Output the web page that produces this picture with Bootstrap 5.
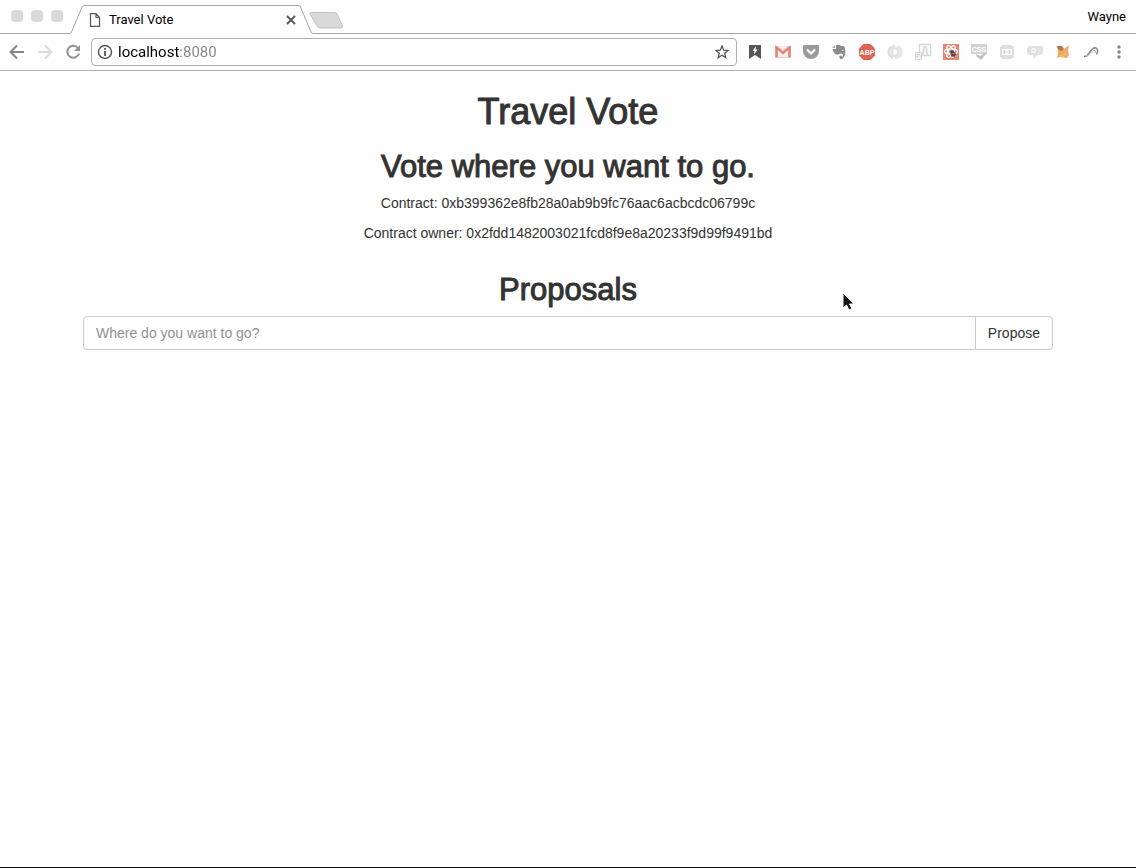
<!DOCTYPE html>
<html lang="en">
<head>
<meta charset="utf-8">
<meta name="viewport" content="width=device-width, initial-scale=1">
<title>Travel Vote</title>
<link rel="stylesheet" href="https://cdn.jsdelivr.net/npm/bootstrap@5.3.0/dist/css/bootstrap.min.css">
<style>
  body { background: #fefefe; color: #333; font-family: "Liberation Sans", Arial, sans-serif; font-size: 14px; line-height: 20px; }
  .window { border-bottom: 1px solid #111; }
  .tabstrip { height: 34px; font-size: 12px; color: #000; }
  .strip-fill { border-bottom: 1px solid #a8a8a8; }
  .lights { width: 70px; padding: 10px 0 0 11px; gap: 8px; }
  .light { width: 12px; height: 12px; border-radius: 4px; background: #d9d9d9; }
  .slant { width: 14px; height: 34px; fill: none; stroke: #a8a8a8; }
  .tab { width: 215px; margin-top: 5px; border-top: 1px solid #a8a8a8; padding: 0 0 0 5px; }
  .tab-name, .profile { font-family: Roboto, "Liberation Sans", sans-serif; font-size: 13px; }
  .profile { padding-right: 10px; }
  .tool { display: flex; align-items: center; justify-content: center; width: 28px; height: 28px; flex: none; padding: 0; border: 0; background: none; }
  .tool-sm { width: 16px; height: 16px; }
  .toolbar { height: 37px; border-bottom: 1px solid #b0b0b0; padding: 4px 3px 4px 3px; }
  .address { height: 28px; border: 1px solid #b0b0b0; border-radius: 4px; margin-right: 4px; }
  /* the host name is black, the port after it grey */
  .url { border: 0; outline: 0; padding: 0; min-width: 0; font-family: Roboto, "Liberation Sans", sans-serif; font-size: 15px; color: transparent; background: linear-gradient(90deg, #000 61px, #858585 61px); -webkit-background-clip: text; background-clip: text; }
  .vote { max-width: 970px; padding: 20px 0 0; }
  h1, h2 { color: #333; font-weight: 400; -webkit-text-stroke: 1px #333; }
  h1 { font-size: 36px; line-height: 41px; margin: 0 0 18px; }
  h2 { font-size: 31px; line-height: 33px; margin: 0 0 10px; }
  .proposals { margin-top: 30px; }
  .vote p { margin: 0 0 10px; }
  .vote .form-control, .vote .btn { height: 34px; font-size: 14px; line-height: 20px; border: 1px solid #ccc; padding: 6px 12px; border-radius: 4px; background: #fff; color: #333; }
  .vote .form-control::placeholder { color: #919191; }
  .pointer { top: 221px; left: calc(50% + 274px); }
</style>
</head>
<body>
<div class="window d-flex flex-column min-vh-100">
  <header>
    <div class="tabstrip d-flex">
      <div class="strip-fill lights d-flex"><span class="light"></span><span class="light"></span><span class="light"></span></div>
      <svg class="slant" viewBox="0 0 14 34"><path d="M0 33.5 Q1 33.5 1.500 32 L12 7 Q13 5.500 14 5.500"/></svg>
      <div class="tab d-flex align-items-center">
        <svg width="12" height="14" viewBox="0 0 12 14" fill="#fff" stroke="#555" stroke-width="1.200"><path d="M1.500 .7H7L10.500 4.500V13.300H1.500ZM7 .7V4.500H10.500"/></svg>
        <span class="tab-name ms-2 flex-grow-1">Travel Vote</span>
        <button class="tool tool-sm" aria-label="Close tab"><svg width="10" height="10" viewBox="0 0 10 10" stroke="#555" stroke-width="1.800"><path d="M1 1L9 9M9 1L1 9"/></svg></button>
      </div>
      <svg class="slant" viewBox="0 0 14 34"><path d="M0 5.500 Q1 5.500 1.500 7L12 32Q13 33.500 14 33.500"/></svg>
      <div class="strip-fill flex-grow-1 d-flex align-items-center justify-content-between">
        <button class="tool" aria-label="New tab"><svg width="36" height="20" viewBox="0 0 36 20" class="flex-shrink-0 mt-2"><path d="M3 1.500H25Q27 1.500 28 3L33.500 15Q34 17 32 17H11Q9 17 8 15L1 3Q.5 1.500 3 1.500Z" fill="#d9d9d9" stroke="#c2c2c2"/></svg></button>
        <span class="profile">Wayne</span>
      </div>
    </div>
    <nav class="toolbar d-flex align-items-center" aria-label="Browser toolbar">
      <button class="tool" aria-label="Back"><svg width="16" height="16" viewBox="0 0 16 16" fill="none" stroke="#858585" stroke-width="2"><path d="M15 8H2M8 1.500L1.500 8L8 14.500"/></svg></button>
      <button class="tool" aria-label="Forward"><svg width="16" height="16" viewBox="0 0 16 16" fill="none" stroke="#dcdcdc" stroke-width="2"><path d="M1 8H14M8 1.500L14.500 8L8 14.500"/></svg></button>
      <button class="tool" aria-label="Reload"><svg width="16" height="16" viewBox="0 0 16 16" fill="none" stroke="#929292" stroke-width="2"><path d="M13 4A6 6 0 1 0 14 9.500"/><path d="M15 1V7H9Z" fill="#929292" stroke="none"/></svg></button>
      <div class="address d-flex align-items-center flex-grow-1 ms-1">
        <svg class="ms-1 me-1 flex-shrink-0" width="18" height="16" viewBox="0 0 18 16" fill="none" stroke="#555"><circle cx="9" cy="8" r="6.500" stroke-width="1.400"/><path d="M9 7V12M9 4V5.700" stroke-width="1.800"/></svg>
        <input class="url flex-grow-1" type="text" value="localhost:8080" aria-label="Address">
        <button class="tool" aria-label="Bookmark this page"><svg width="14" height="14" viewBox="0 0 14 14" fill="none" stroke="#555" stroke-width="1.300"><path d="M7 1L8.700 5.200L13 5.500L9.700 8.300L10.800 12.700L7 10.300L3.200 12.700L4.300 8.300L1 5.500L5.300 5.200Z"/></svg></button>
      </div>
      <button class="tool" aria-label="Saved pages"><svg width="16" height="16" viewBox="0 0 16 16"><path d="M2 1H14V15L8 11L2 15Z" fill="#555"/><path d="M9 2L5.500 7H7.500L7 10.500L10.500 5.500H8.500Z" fill="#fff"/></svg></button>
      <button class="tool" aria-label="Mail"><svg width="16" height="14" viewBox="0 0 16 14"><path d="M0 1H16V13H0Z" fill="#f0c4bc"/><path d="M3 4V12H13V4L8 8Z" fill="#fbf1ef"/><path d="M1.500 12V2.500L8 8L14.500 2.500V12" fill="none" stroke="#e27f70" stroke-width="2.200"/><path d="M3.500 1H12.500L8 5.500Z" fill="#fbf1ef"/></svg></button>
      <button class="tool" aria-label="Pocket"><svg width="16" height="16" viewBox="0 0 16 16"><path d="M1 1H15Q16 1 16 2V7A8 8 0 0 1 0 7V2Q0 1 1 1Z" fill="#9a9a9a"/><path d="M4 5.500L8 9.500L12 5.500" fill="none" stroke="#fff" stroke-width="2.200"/></svg></button>
      <button class="tool" aria-label="Clipper"><svg width="16" height="16" viewBox="0 0 16 16"><path d="M5 1H9L10 2H12Q14 2 14 5Q15 10 13 13Q12 15.500 9.500 15Q7.500 14 8.500 12L11 11.500V13L12 12V10L9 9.500Q8 11 6 10.500Q2.500 10 1.500 5H5Z" fill="#8c8c8c"/><path d="M1 4L4 1V4Z" fill="#aaa"/><path d="M11 6.500H12.500" stroke="#ddd"/></svg></button>
      <button class="tool" aria-label="Ad blocker"><svg width="18" height="18" viewBox="0 0 18 18"><path d="M5.500 1H12.500L17 5.500V12.500L12.500 17H5.500L1 12.500V5.500Z" fill="#df6350"/><text x="9" y="12" text-anchor="middle" font-family="Liberation Sans" font-size="7" font-weight="700" fill="#fff">ABP</text></svg></button>
      <button class="tool" aria-label="Sync"><svg width="16" height="16" viewBox="0 0 16 16" fill="none"><path d="M8 2.500Q2 3 1.800 8Q2 12 6 13.500" stroke="#dedede" stroke-width="3"/><path d="M8 13.500Q14 13 14.200 8Q14 4 10 2.500" stroke="#e4e4e4" stroke-width="3"/><path d="M5 8A3 4 0 0 1 11 8A3 4 0 0 1 5 8Z" stroke="#e0e0e0" stroke-width="2"/></svg></button>
      <button class="tool" aria-label="Page ruler"><svg width="18" height="18" viewBox="0 0 18 18" fill="none" stroke="#d6d6d6"><path d="M5.500 1.500H16.500V12.500H5.500Z" stroke-width="1.300"/><path d="M8.500 11.500L9.500 9V5Q11 2 12.500 5V9L14 11.500" stroke-width="1.600"/><path d="M1.500 9.500H7.500V16.500H1.500Z" fill="#fff"/><text x="2" y="15" font-family="Liberation Sans" font-size="6" fill="#bbb" stroke="none">Pi</text></svg></button>
      <button class="tool" aria-label="React tools"><svg width="16" height="16" viewBox="0 0 16 16"><path d="M0 0H16V16H0Z" fill="#e58576"/><g fill="none" stroke="#fff" stroke-width="1.200"><ellipse cx="8" cy="7.500" rx="6.500" ry="2.700"/><ellipse cx="8" cy="7.500" rx="6.500" ry="2.700" transform="rotate(60 8 7.500)"/><ellipse cx="8" cy="7.500" rx="6.500" ry="2.700" transform="rotate(120 8 7.500)"/></g><path d="M7 7L10 6L13 10L12 13L8 12Z" fill="#554540"/><path d="M7 10L13 9M8 12L12 13.500" stroke="#918078"/></svg></button>
      <button class="tool" aria-label="CSS checker"><svg width="18" height="18" viewBox="0 0 18 18"><path d="M1 1H17V11H1Z" fill="#d2d2d2"/><text x="9" y="8.500" text-anchor="middle" font-family="Liberation Sans" font-size="7" font-weight="700" fill="#fff">CSS</text><path d="M6 11L10 13L16 9V11L11 17L6 13Z" fill="#c2c2c2"/></svg></button>
      <button class="tool" aria-label="Frames"><svg width="16" height="16" viewBox="0 0 16 16"><rect x="1.500" y="1.500" width="13" height="13" rx="3" fill="#dedede" stroke="#d5dce2"/><path d="M3 5H13V11H3Z" fill="#fff"/><path d="M4 8H12M5.500 6V10M10.500 6V10" stroke="#ccc"/></svg></button>
      <button class="tool" aria-label="Chat"><svg width="18" height="16" viewBox="0 0 18 16"><path d="M3 2H16L17 4V9L15 11H11L8 15L7 11H3L1 9V4Z" fill="#e0e0e0"/><circle cx="7.500" cy="6.500" r="1.800" fill="none" stroke="#fff" stroke-width="1.200"/><path d="M13 4V10" stroke="#eee"/></svg></button>
      <button class="tool" aria-label="Wallet"><svg width="16" height="16" viewBox="0 0 16 16"><path d="M2 2L6 3L9 5L14 1L13 7L14 11L12 14L5 13L2 14L3 9Z" fill="#e9ad66"/><path d="M2 2L7 2L9 5L6 7L3 5Z" fill="#ad794f"/><path d="M4 11L8 13L11 9" fill="none" stroke="#f2c78c"/></svg></button>
      <button class="tool" aria-label="Stream"><svg width="16" height="16" viewBox="0 0 16 16" fill="none" stroke="#858585"><path d="M1 12.500Q4 13 7 8Q10 3 13 4Q16 6 13.500 10.500" stroke-width="1.500"/><path d="M2 12Q6 12 9 7.500Q11 5 12.500 7L12 9" stroke="#bbb"/></svg></button>
      <button class="tool" aria-label="Menu"><svg width="4" height="14" viewBox="0 0 4 14" fill="#858585"><circle cx="2" cy="2" r="1.700"/><circle cx="2" cy="7" r="1.700"/><circle cx="2" cy="12" r="1.700"/></svg></button>
    </nav>
  </header>
  <main class="position-relative">
    <div class="vote container text-center">
      <h1>Travel Vote</h1>
      <h2>Vote where you want to go.</h2>
      <p>Contract: 0xb399362e8fb28a0ab9b9fc76aac6acbcdc06799c</p>
      <p>Contract owner: 0x2fdd1482003021fcd8f9e8a20233f9d99f9491bd</p>
      <h2 class="proposals">Proposals</h2>
      <form class="input-group">
        <input class="form-control" type="text" placeholder="Where do you want to go?" aria-label="Where do you want to go?">
        <button class="btn" type="button">Propose</button>
      </form>
    </div>
    <svg class="pointer position-absolute" width="14" height="20" viewBox="0 0 14 20"><path d="M1 1V16L4.500 13L7 18L10 16.500L7.500 12H12Z" fill="#111" stroke="#fff"/></svg>
  </main>
</div>
<script src="https://cdn.jsdelivr.net/npm/bootstrap@5.3.0/dist/js/bootstrap.bundle.min.js"></script>
</body>
</html>
